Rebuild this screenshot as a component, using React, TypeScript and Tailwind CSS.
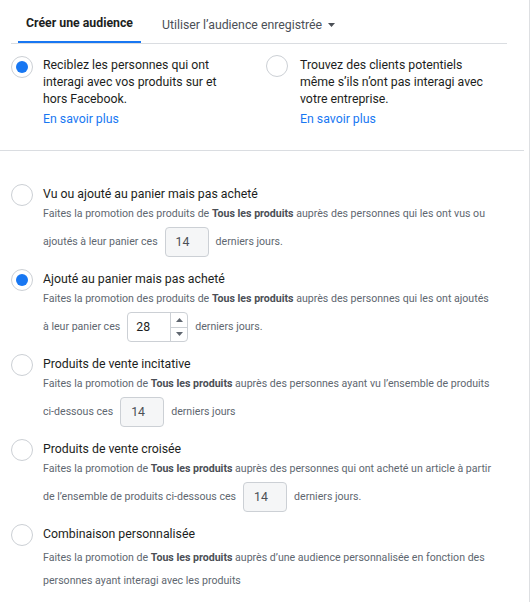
import React from "react";

function Radio({ checked }: { checked?: boolean }) {
  return (
    <div className="w-[22px] h-[22px] shrink-0 rounded-full border border-[#ccd0d5] bg-white flex items-center justify-center">
      {checked && <div className="w-[12px] h-[12px] rounded-full bg-[#1877f2]" />}
    </div>
  );
}

function Box({ value }: { value: string }) {
  return (
    <div className="mx-[7px] w-[44px] h-[30px] rounded-[4px] border border-[#ccd0d5] bg-[#f5f6f7] flex items-center pl-[10px] text-[12.3px] text-[#4b4f56]">
      {value}
    </div>
  );
}

function Spinner({ value }: { value: string }) {
  return (
    <div className="mx-[7px] w-[61px] h-[30px] rounded-[4px] border border-[#ccd0d5] bg-white flex">
      <div className="flex-1 flex items-center pl-[8px] text-[12.3px] text-[#1c1e21]">{value}</div>
      <div className="w-[17px] border-l border-[#ccd0d5] flex flex-col">
        <div className="flex-1 flex items-center justify-center border-b border-[#ccd0d5]">
          <svg width="7" height="4" viewBox="0 0 7 4"><path d="M0 4 L3.5 0 L7 4 Z" fill="#606770" /></svg>
        </div>
        <div className="flex-1 flex items-center justify-center">
          <svg width="7" height="4" viewBox="0 0 7 4"><path d="M0 0 L3.5 4 L7 0 Z" fill="#606770" /></svg>
        </div>
      </div>
    </div>
  );
}

const B = ({ children }: { children: React.ReactNode }) => (
  <span className="font-bold text-[#4b4f56]">{children}</span>
);

function Option({
  checked,
  title,
  line1,
  line2,
}: {
  checked?: boolean;
  title: string;
  line1: React.ReactNode;
  line2: React.ReactNode;
}) {
  return (
    <div className="flex items-start gap-[10px]">
      <Radio checked={checked} />
      <div className="flex flex-col pt-[1px]">
        <div className="text-[12.3px] leading-[18px] text-[#1c1e21]">{title}</div>
        <div className="mt-[2px] text-[10.6px] leading-[18px] text-[#606770] whitespace-nowrap">{line1}</div>
        <div className="mt-[4px] h-[30px] flex items-center text-[10.6px] text-[#606770] whitespace-nowrap">{line2}</div>
      </div>
    </div>
  );
}

export default function App() {
  return (
    <div
      className="w-[530px] h-[602px] bg-white border-r border-[#dddfe2] overflow-hidden"
      style={{ fontFamily: "Roboto, 'Liberation Sans', Arial, sans-serif" }}
    >
      {/* Tabs */}
      <div className="ml-[11px] w-[496px] h-[44px] border-b border-[#dadde1] flex">
        <div className="ml-[7px] px-[8px] pt-[6px] h-full flex items-center border-b-2 border-[#1877f2] text-[12.3px] font-bold text-[#1c1e21]">
          Créer une audience
        </div>
        <div className="ml-[13px] px-[8px] pt-[7px] h-full flex items-center text-[12.3px] text-[#4b4f56] mb-[-1px]">
          Utiliser l’audience enregistrée
          <svg className="ml-[6px]" width="7" height="4" viewBox="0 0 7 4"><path d="M0 0 L7 0 L3.5 4 Z" fill="#4b4f56" /></svg>
        </div>
      </div>

      {/* Top choice */}
      <div className="w-[524px] border-b border-[#dadde1] pt-[12px] pb-[22px] pl-[11px] flex">
        <div className="w-[255px] flex items-start gap-[10px]">
          <Radio checked />
          <div className="flex flex-col pt-[1px]">
            <div className="text-[12.3px] leading-[17px] text-[#1c1e21] whitespace-nowrap">
              <div>Reciblez les personnes qui ont</div>
              <div>interagi avec vos produits sur et</div>
              <div>hors Facebook.</div>
            </div>
            <div className="mt-[3px] text-[12.3px] leading-[17px] text-[#1877f2]">En savoir plus</div>
          </div>
        </div>
        <div className="flex items-start gap-[12px] -mt-[1px]">
          <Radio />
          <div className="flex flex-col mt-[2px]">
            <div className="text-[12.3px] leading-[17px] text-[#1c1e21] whitespace-nowrap">
              <div>Trouvez des clients potentiels</div>
              <div>même s’ils n’ont pas interagi avec</div>
              <div>votre entreprise.</div>
            </div>
            <div className="mt-[3px] text-[12.3px] leading-[17px] text-[#1877f2]">En savoir plus</div>
          </div>
        </div>
      </div>

      {/* Options */}
      <div className="pl-[11px] pt-[33px] flex flex-col gap-[12px]">
        <Option
          title="Vu ou ajouté au panier mais pas acheté"
          line1={<>Faites la promotion des produits de <B>Tous les produits</B> auprès des personnes qui les ont vus ou</>}
          line2={<>ajoutés à leur panier ces<Box value="14" />derniers jours.</>}
        />
        <Option
          checked
          title="Ajouté au panier mais pas acheté"
          line1={<>Faites la promotion des produits de <B>Tous les produits</B> auprès des personnes qui les ont ajoutés</>}
          line2={<>à leur panier ces<Spinner value="28" />derniers jours.</>}
        />
        <Option
          title="Produits de vente incitative"
          line1={<>Faites la promotion de <B>Tous les produits</B> auprès des personnes ayant vu l’ensemble de produits</>}
          line2={<>ci-dessous ces<Box value="14" />derniers jours</>}
        />
        <Option
          title="Produits de vente croisée"
          line1={<>Faites la promotion de <B>Tous les produits</B> auprès des personnes qui ont acheté un article à partir</>}
          line2={<>de l’ensemble de produits ci-dessous ces<Box value="14" />derniers jours.</>}
        />
        <div className="flex items-start gap-[10px]">
          <Radio />
          <div className="flex flex-col pt-[1px]">
            <div className="text-[12.3px] leading-[18px] text-[#1c1e21]">Combinaison personnalisée</div>
            <div className="mt-[3px] text-[10.6px] leading-[23px] text-[#606770] whitespace-nowrap">
              <div>Faites la promotion de <B>Tous les produits</B> auprès d’une audience personnalisée en fonction des</div>
              <div>personnes ayant interagi avec les produits</div>
            </div>
          </div>
        </div>
      </div>
    </div>
  );
}
